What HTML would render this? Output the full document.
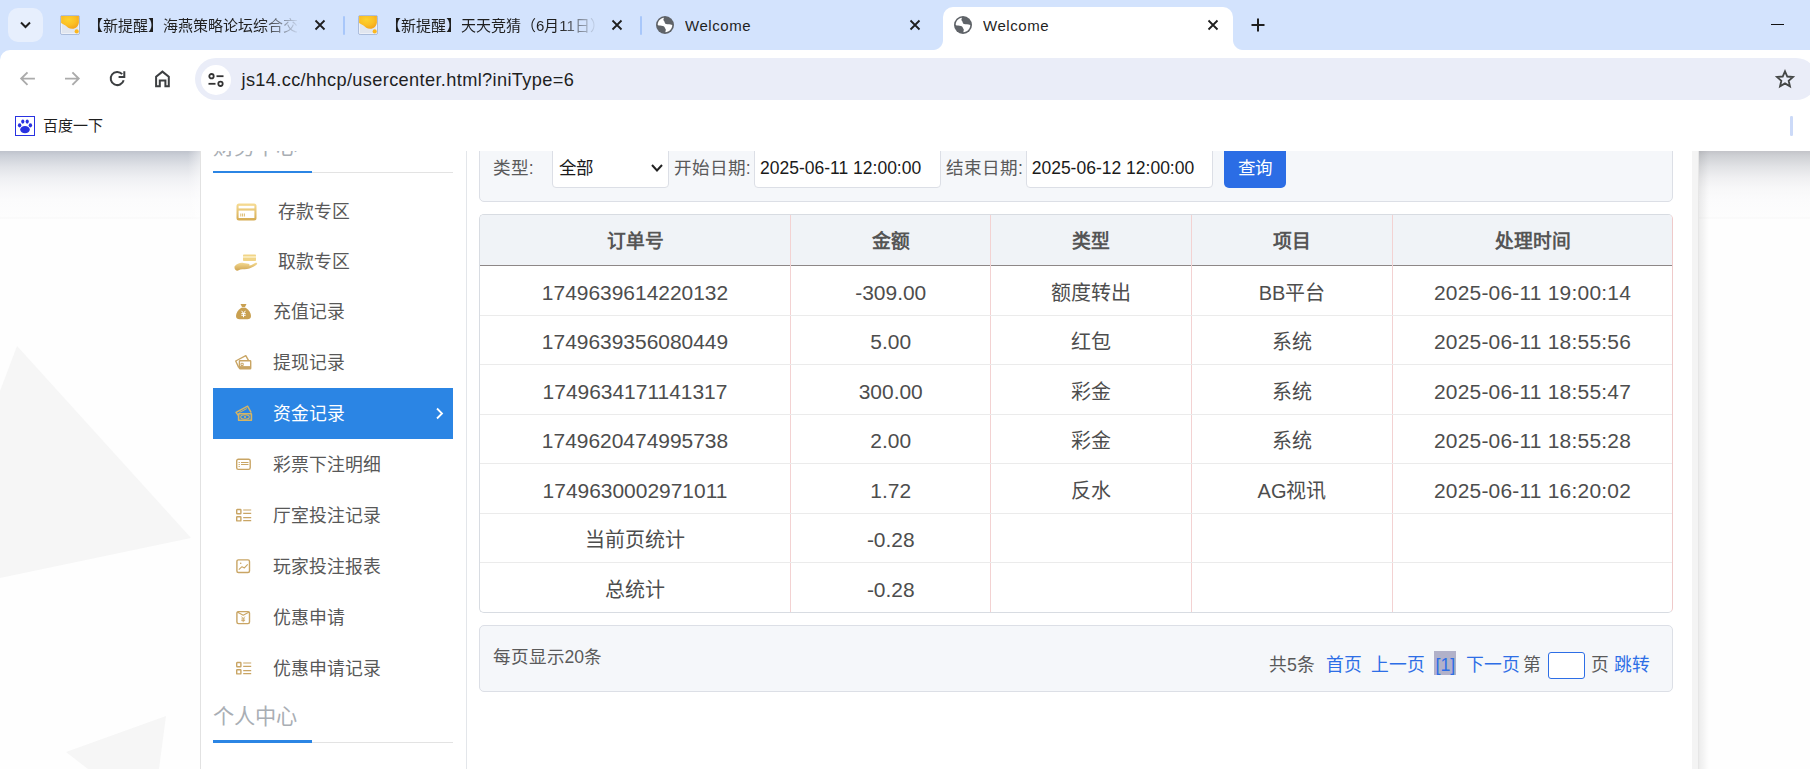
<!DOCTYPE html>
<html lang="zh-CN">
<head>
<meta charset="utf-8">
<title>Welcome</title>
<style>
*{box-sizing:border-box;margin:0;padding:0}
html,body{width:1810px;height:769px;overflow:hidden;background:#fff}
body{position:relative;font-family:"Liberation Sans",sans-serif;color:#4d4d4d}
.abs{position:absolute}
svg{display:block}

/* ---------- browser chrome ---------- */
#tabstrip{position:absolute;left:0;top:0;width:1810px;height:64px;background:#d3e3fd}
#tabsearch{position:absolute;left:8px;top:8px;width:35px;height:34px;border-radius:10px;background:#e7effd}
.ttitle.w{letter-spacing:.55px}
.ttitle{position:absolute;top:14.7px;height:22px;line-height:22px;font-size:15px;color:#1f1f1f;white-space:nowrap;overflow:hidden}
.fade{-webkit-mask-image:linear-gradient(to right,#000 82%,transparent 100%);mask-image:linear-gradient(to right,#000 82%,transparent 100%)}
.tsep{position:absolute;top:16px;width:2px;height:19px;background:#a8c7fa;border-radius:1px}
.fav{position:absolute;top:15px;width:20px;height:20px}
#activetab{position:absolute;left:943px;top:7px;width:290px;height:43px;background:#fff;border-radius:10px 10px 0 0}
#activetab:before,#activetab:after{content:"";position:absolute;bottom:0;width:10px;height:10px}
#activetab:before{left:-10px;background:radial-gradient(circle at 0 0,transparent 9.5px,#fff 10.5px)}
#activetab:after{right:-10px;background:radial-gradient(circle at 100% 0,transparent 9.5px,#fff 10.5px)}
#toolbar{position:absolute;left:0;top:50px;width:1810px;height:101px;background:#fff;border-top-left-radius:10px}
#omni{position:absolute;left:195px;top:8px;width:1622px;height:42px;border-radius:21px;background:#eaedf8}
#omni .chip{position:absolute;left:6px;top:6.5px;width:30px;height:30px;border-radius:15px;background:#fff}
#url{position:absolute;left:46.5px;top:1px;height:42px;line-height:42px;font-size:18.2px;letter-spacing:.36px;color:#1f1f1f;white-space:nowrap}
#bm{position:absolute;left:43px;top:66px;height:20px;line-height:20px;font-size:15px;color:#1f1f1f}

/* ---------- page ---------- */
#page{position:absolute;left:0;top:151px;width:1810px;height:618px;overflow:hidden;background:#fff}
.shade{position:absolute;top:0;height:68px;background:linear-gradient(to bottom,#bfc3cc 0,#ccd0d8 5px,#e1e3e8 16px,#eff0f3 27px,#f7f7f9 38px,#fbfbfc 49px,#fdfdfd 66px,#f7f7f7 67px,#fefefe 68px)}
.shade.r{background:linear-gradient(to bottom,#c3c4c9 0,#cfd1d5 5px,#e2e3e6 16px,#f0f0f2 27px,#f8f8f9 38px,#fbfbfc 49px,#fdfdfd 66px,#f7f7f7 67px,#fefefe 68px)}
.shade.l:after{content:"";position:absolute;right:0;top:0;width:12px;height:100%;background:linear-gradient(to right,rgba(255,255,255,0),rgba(255,255,255,.45))}
#rshadow{position:absolute;left:1699px;top:0;width:10px;height:618px;background:linear-gradient(to right,rgba(0,0,0,.07),rgba(0,0,0,0))}
#lbg{position:absolute;left:0;top:0;width:200px;height:618px;background:#fefefe}
#rbg{position:absolute;left:1699px;top:0;width:111px;height:618px;background:#fefefe}
#wrap{position:absolute;left:200px;top:0;width:1499px;height:618px;background:#fff;border-left:1px solid #e2e2e2}
#rstrip{position:absolute;left:1692px;top:0;width:7px;height:618px;background:#f4f4f4;border-right:1px solid #e6e6e6}
#side{position:absolute;left:201px;top:0;width:266px;height:618px;border-right:1px solid #e3e6ea}
.h{position:absolute;left:212.500px;font-size:21.2px;line-height:28px;color:#a9aeb4;white-space:nowrap}
.ul{position:absolute;left:213px;width:240px;height:1px;background:#e3e3e3}
.ul i{position:absolute;left:0;top:-1.5px;width:99px;height:2.5px;background:#2b85e4}
.mi{position:absolute;left:213px;width:240px;height:51px;font-size:17.85px;line-height:52.4px;color:#585858;white-space:nowrap}
.mi span{position:absolute;left:60px;top:0}
.mi.big span{left:65px}
.mi svg{position:absolute}
.mi.on{background:#2b85e4;color:#fff}

.panel{position:absolute;left:479px;width:1194px;background:#f5f7fa;border:1px solid #dcdfe6;border-radius:5px}
.lbl{position:absolute;font-size:17.6px;line-height:24px;color:#5a5a5a;white-space:nowrap}
.lbl.pg{font-size:17.8px}
.inp{position:absolute;top:-4px;height:41px;background:#fff;border:1px solid #dcdfe6;border-radius:4px;font-size:17.5px;line-height:41px;color:#1a1a1a;white-space:nowrap}
#btn{position:absolute;left:1224px;top:-4px;width:62px;height:41px;border-radius:5px;background:#2b6de5;color:#fff;font-size:17.5px;line-height:43px;text-align:center}

#tbl{position:absolute;left:479px;top:63px;width:1194px;height:399px;border:1px solid #d8dce2;border-right-color:#efcaca;border-radius:5px;overflow:hidden;background:#fff}
#tbl .hd{position:absolute;left:0;top:0;width:100%;height:50.7px;background:#f0f3f7;border-bottom:1.5px solid #8d8787}
.vl{position:absolute;top:0;width:1px;height:100%;background:#f3d2d2}
.hl{position:absolute;left:0;width:100%;height:1px;background:#ebebeb}
.c{position:absolute;text-align:center;white-space:nowrap;font-size:20px;line-height:30px;color:#4d4d4d}
.c.n{font-size:20.95px}
.c.d{letter-spacing:.22px}
.c.th{font-size:18.75px;font-weight:bold;color:#555}
a,a.lbl{color:#2d6ee6;text-decoration:none}
</style>
</head>
<body>

<!-- ================= TAB STRIP ================= -->
<div id="tabstrip">
  <div id="tabsearch">
    <svg class="abs" style="left:11px;top:12px" width="13" height="10" viewBox="0 0 13 10"><path d="M2 2.5 L6.5 7 L11 2.5" fill="none" stroke="#1f1f1f" stroke-width="2"/></svg>
  </div>

  <!-- tab 1 -->
  <svg class="fav" style="left:60px" viewBox="0 0 20 20"><defs><radialGradient id="fg" cx="0.420" cy="0.300" r="0.750"><stop offset="0" stop-color="#fdd22f"/><stop offset="0.550" stop-color="#fbbf24"/><stop offset="1" stop-color="#f3a31a"/></radialGradient></defs><rect x="0.500" y="0.500" width="19" height="19" rx="1.600" fill="#e1e6ef" stroke="#a6b8d9"/><rect x="1.400" y="1.400" width="17.200" height="17.200" rx="0.800" fill="none" stroke="#f3f5fa" stroke-width="0.800"/><path d="M1.100 1.100H18.900V7.500C18.500 11 16 13.800 12.200 13.800C9 13.800 7 12 5.500 10.600C4 9.500 2.500 9 1.100 8.100Z" fill="url(#fg)"/><circle cx="16.700" cy="16.400" r="2.100" fill="#fbb71f"/></svg>
  <div class="ttitle fade" style="left:88px;width:212px">【新提醒】海燕策略论坛综合交流</div>
  <svg class="abs" style="left:314px;top:19px" width="12" height="12" viewBox="0 0 12 12"><path d="M1.5 1.5 L10.5 10.5 M10.5 1.5 L1.5 10.5" stroke="#1f1f1f" stroke-width="1.8" fill="none"/></svg>
  <div class="tsep" style="left:343px"></div>

  <!-- tab 2 -->
  <svg class="fav" style="left:358px" viewBox="0 0 20 20"><rect x="0.500" y="0.500" width="19" height="19" rx="1.600" fill="#e1e6ef" stroke="#a6b8d9"/><rect x="1.400" y="1.400" width="17.200" height="17.200" rx="0.800" fill="none" stroke="#f3f5fa" stroke-width="0.800"/><path d="M1.100 1.100H18.900V7.500C18.500 11 16 13.800 12.200 13.800C9 13.800 7 12 5.500 10.600C4 9.500 2.500 9 1.100 8.100Z" fill="url(#fg)"/><circle cx="16.700" cy="16.400" r="2.100" fill="#fbb71f"/></svg>
  <div class="ttitle fade" style="left:386px;width:212px">【新提醒】天天竞猜（6月11日）</div>
  <svg class="abs" style="left:611px;top:19px" width="12" height="12" viewBox="0 0 12 12"><path d="M1.5 1.5 L10.5 10.5 M10.5 1.5 L1.5 10.5" stroke="#1f1f1f" stroke-width="1.8" fill="none"/></svg>
  <div class="tsep" style="left:640px"></div>

  <!-- tab 3 -->
  <svg class="abs" style="left:656px;top:16px" width="18" height="18" viewBox="0 0 24 24"><circle cx="12" cy="12" r="12" fill="#5f6368"/><path fill="#fff" d="M2.300 12C2.300 6.700 6 2.700 10.700 2.300C10 4 9.300 5.300 10.700 6.700C12 8 11.300 10 13.300 10.700C16 11.300 18.700 10.700 21.700 12C21.700 17.300 17.300 21.300 12.700 21.700C12 20 14 18.700 12.700 17.300C11.300 15.300 12 14 9.300 13.300C6.700 12.700 4 13.300 2.300 12Z"/></svg>
  <div class="ttitle w" style="left:685px;top:14.900px;width:200px">Welcome</div>
  <svg class="abs" style="left:909px;top:19px" width="12" height="12" viewBox="0 0 12 12"><path d="M1.500 1.500 L10.500 10.500 M10.500 1.500 L1.500 10.500" stroke="#1f1f1f" stroke-width="1.800" fill="none"/></svg>

  <!-- active tab -->
  <div id="activetab">
    <svg class="abs" style="left:11px;top:9px" width="18" height="18" viewBox="0 0 24 24"><circle cx="12" cy="12" r="12" fill="#5f6368"/><path fill="#fff" d="M2.300 12C2.300 6.700 6 2.700 10.700 2.300C10 4 9.300 5.300 10.700 6.700C12 8 11.300 10 13.300 10.700C16 11.300 18.700 10.700 21.700 12C21.700 17.300 17.300 21.300 12.700 21.700C12 20 14 18.700 12.700 17.300C11.300 15.300 12 14 9.300 13.300C6.700 12.700 4 13.300 2.300 12Z"/></svg>
    <div class="ttitle w" style="left:40px;top:7.700px;width:200px">Welcome</div>
    <svg class="abs" style="left:263.500px;top:12px" width="12" height="12" viewBox="0 0 12 12"><path d="M1.500 1.500 L10.500 10.500 M10.500 1.500 L1.500 10.500" stroke="#1f1f1f" stroke-width="1.800" fill="none"/></svg>
  </div>

  <!-- new tab + -->
  <svg class="abs" style="left:1251px;top:18px" width="14" height="14" viewBox="0 0 14 14"><path d="M7 0.500V13.500M0.500 7H13.500" stroke="#1f1f1f" stroke-width="2" fill="none"/></svg>
  <!-- minimize -->
  <div class="abs" style="left:1771px;top:24px;width:13px;height:1px;background:#111"></div>
</div>

<!-- ================= TOOLBAR ================= -->
<div id="toolbar">
  <!-- back -->
  <svg class="abs" style="left:18px;top:20px" width="19" height="19" viewBox="0 0 19 19"><path d="M16.900 8.600H3.300M9.500 2.300L3.200 8.600L9.500 14.900" fill="none" stroke="#ababab" stroke-width="1.900"/></svg>
  <!-- forward -->
  <svg class="abs" style="left:63px;top:20px" width="19" height="19" viewBox="0 0 19 19"><path d="M2 8.600H15.600M9.400 2.300L15.700 8.600L9.400 14.900" fill="none" stroke="#ababab" stroke-width="1.900"/></svg>
  <!-- reload -->
  <svg class="abs" style="left:107px;top:19px" width="20" height="20" viewBox="0 0 20 20"><path d="M16.670 11.200A6.600 6.600 0 1 1 15.200 5.080" fill="none" stroke="#3c3f41" stroke-width="2"/><path d="M17.300 2.200V7.900H11.600" fill="none" stroke="#3c3f41" stroke-width="2"/></svg>
  <!-- home -->
  <svg class="abs" style="left:153px;top:19px" width="20" height="20" viewBox="0 0 20 20"><path d="M3.100 17.300V7.700L9.450 2.600L15.800 7.700V17.300H12.400V11.600H6.800V17.300Z" fill="none" stroke="#3c3f41" stroke-width="2" stroke-linejoin="miter"/></svg>

  <div id="omni">
    <div class="chip">
      <svg class="abs" style="left:7px;top:8px" width="16" height="14" viewBox="0 0 16 14"><g fill="none" stroke="#333" stroke-width="1.800"><circle cx="3.500" cy="3.200" r="2.200"/><path d="M8.500 3.200H15.500"/><circle cx="12.500" cy="10.800" r="2.200"/><path d="M0.500 10.800H7.500"/></g></svg>
    </div>
    <div id="url">js14.cc/hhcp/usercenter.html?iniType=6</div>
    <!-- star -->
    <svg class="abs" style="left:1579px;top:10px" width="22" height="22" viewBox="0 0 24 24"><path d="M12 3.600l2.500 5.700 6.200.55-4.700 4.100 1.400 6.100L12 16.800 6.600 20.050l1.400-6.100-4.700-4.100 6.200-.55z" fill="none" stroke="#444746" stroke-width="2" stroke-linejoin="miter"/></svg>
  </div>

  <!-- bookmarks bar -->
  <svg class="abs" style="left:15px;top:66px" width="20" height="20" viewBox="0 0 20 20"><rect x="0.500" y="0.500" width="19" height="19" fill="#fff" stroke="#2932e1"/><g fill="#2932e1"><ellipse cx="10" cy="13.600" rx="4.800" ry="3.600"/><ellipse cx="4.600" cy="9.300" rx="1.700" ry="2.100"/><ellipse cx="15.400" cy="9.300" rx="1.700" ry="2.100"/><ellipse cx="7.800" cy="5.600" rx="1.600" ry="2.100"/><ellipse cx="12.200" cy="5.600" rx="1.600" ry="2.100"/></g></svg>
  <div id="bm">百度一下</div>
  <div class="abs" style="left:1790px;top:66px;width:2.500px;height:19.500px;background:#ccdaf8;border-radius:1.250px"></div>
</div>

<!-- ================= PAGE ================= -->
<div id="page">
  <!-- decorative background -->
  <div id="lbg"></div><div id="rbg"></div>
  <svg class="abs" style="left:0;top:0" width="200" height="618" viewBox="0 151 200 618"><polygon points="17,346 191,538 0,578 0,391" fill="#f6f6f6"/><polygon points="166,716 66,752 88,769 159,769" fill="#f6f6f6"/></svg>
  <div class="shade l" style="left:0;width:200px"></div>
  <div class="shade r" style="left:1699px;width:111px"></div>
  <div id="rshadow"></div>

  <div id="wrap"></div>
  <div id="rstrip"></div>
  <div id="side"></div>

  <!-- sidebar -->
  <div class="h" style="top:-18.200px">财务中心</div>
  <div class="ul" style="top:21px"><i></i></div>
  <div class="mi big" style="top:34.5px"><svg style="left:23px;top:17px" width="21" height="18" viewBox="0 0 21 18"><defs><linearGradient id="g1" x1="0" y1="0" x2="0" y2="1"><stop offset="0" stop-color="#f7dc93"/><stop offset="1" stop-color="#d5ab52"/></linearGradient></defs><rect x="0.5" y="0.5" width="20" height="17" rx="2.5" fill="url(#g1)"/><rect x="2.6" y="2.8" width="15.8" height="2.6" fill="#fff"/><rect x="2.6" y="7.6" width="15.8" height="7.4" fill="#fff"/><path d="M4.8 10.5v3M6.6 10.5v3M8.4 10.5v3" stroke="#d9b25c" stroke-width="0.9"/></svg><span>存款专区</span></div>
  <div class="mi big" style="top:84.7px"><svg style="left:21px;top:18px" width="24" height="17" viewBox="0 0 24 17"><defs><linearGradient id="g2" x1="0" y1="0" x2="0" y2="1"><stop offset="0" stop-color="#f4da92"/><stop offset="1" stop-color="#cfa450"/></linearGradient></defs><rect x="9" y="0.5" width="13" height="6.5" rx="0.8" fill="#f1d588"/><rect x="9" y="2.2" width="13" height="1.6" fill="#fbeec4"/><path d="M0.5 12.5c2.500-3.200 6-4.300 9-3.600l5 .8c1.300.2 1.300 1.800 0 1.900l-3.500.2 6-.6 4.500-2.400c1.400-.6 2.300.8 1.200 1.700-3 2.300-6.200 4.100-9.700 4.500-3.200.4-6.300-.2-8.300 1.200-1.800 1.300-4.700-.4-4.200-3.700z" fill="url(#g2)"/></svg><span>取款专区</span></div>
  <div class="mi " style="top:134.9px"><svg style="left:22px;top:17px" width="17" height="17" viewBox="0 0 17 17"><path d="M5.500 1h6l-1.600 3.200h-2.800z" fill="#c9a050"/><path d="M6.300 4.800h4.400c3.200 2 5.300 5.300 5.300 8.100 0 2.200-1.500 3.300-3.500 3.300h-8c-2 0-3.500-1.100-3.500-3.300 0-2.800 2.100-6.100 5.300-8.100z" fill="#c9a050"/><path d="M6.600 7.800l1.900 2.600 1.900-2.600M6.300 10.600h4.400M6.300 12.300h4.400M8.500 10.400v3.800" stroke="#fff" stroke-width="1" fill="none"/></svg><span>充值记录</span></div>
  <div class="mi " style="top:185.9px"><svg style="left:22px;top:17px" width="17" height="17" viewBox="0 0 17 17"><g fill="none" stroke="#c9a564" stroke-width="1.400" stroke-linejoin="round"><rect x="4.400" y="6.800" width="11.300" height="8" rx="0.600"/><path d="M4.400 13.300h11.300" stroke-width="2.400"/><rect x="6" y="9.300" width="2.200" height="2.200" stroke-width="1"/><path d="M3.800 13.600L0.700 7L10.800 1.700L13.600 6.600"/></g></svg><span>提现记录</span></div>
  <div class="mi on" style="top:236.8px"><svg style="left:22px;top:17px" width="18" height="17" viewBox="0 0 18 17"><g fill="none" stroke="#d6b563" stroke-width="1.400" stroke-linejoin="round"><rect x="3.600" y="8.700" width="12.800" height="6.600" rx="0.400" stroke-width="1.600"/><ellipse cx="10" cy="12" rx="4.300" ry="2.200" stroke-width="1.100"/><circle cx="10" cy="12" r="1.100" fill="#d6b563" stroke="none"/><path d="M3.200 10.300L1 7.300L12.600 1.200L16.200 7.600"/><path d="M4.500 7.400L11.800 3.600" stroke-width="1"/></g></svg><span>资金记录</span><svg style="left:222px;top:19px" width="9" height="13" viewBox="0 0 9 13"><path d="M2 1.500L7 6.500L2 11.500" fill="none" stroke="#fff" stroke-width="1.800"/></svg></div>
  <div class="mi " style="top:287.9px"><svg style="left:22px;top:19px" width="16" height="13" viewBox="0 0 16 13"><g fill="none" stroke="#c9a564" stroke-width="1.400"><rect x="1.700" y="1.200" width="13.500" height="10.200" rx="1.600"/><path d="M3.600 4.500h1.200M6 4.500h7.500M3.600 6.500h1.200M6 6.500h7.500M3.600 8.500h1.200" stroke-width="1.100"/></g></svg><span>彩票下注明细</span></div>
  <div class="mi " style="top:338.9px"><svg style="left:22px;top:18px" width="17" height="15" viewBox="0 0 17 15"><g fill="none" stroke="#c9a564" stroke-width="1.400"><rect x="1.700" y="1.500" width="4.200" height="4.200" rx="0.500"/><rect x="1.700" y="8.700" width="4.200" height="4.200" rx="0.500"/><path d="M8.200 2h8M8.200 5.300h8M8.200 9.600h8M8.200 12.700h8" stroke-width="1.200"/></g></svg><span>厅室投注记录</span></div>
  <div class="mi " style="top:389.9px"><svg style="left:22px;top:18px" width="16" height="15" viewBox="0 0 16 15"><g fill="none" stroke="#c9a564" stroke-width="1.400" stroke-linejoin="round"><rect x="1.900" y="0.900" width="12.600" height="12.600" rx="1.500"/><path d="M3.800 10.600l3.200-2.900 2.400 1.200 3.300-3.600" stroke-width="1.100"/><circle cx="5.700" cy="4.300" r="0.800" fill="#c9a564" stroke="none"/></g></svg><span>玩家投注报表</span></div>
  <div class="mi " style="top:440.9px"><svg style="left:22px;top:18px" width="16" height="15" viewBox="0 0 16 15"><g fill="none" stroke="#c9a564" stroke-width="1.400" stroke-linejoin="round"><rect x="1.900" y="1.600" width="12.600" height="12" rx="1.500"/><path d="M2.200 1.900L8.200 5.300L14.200 1.900" stroke-width="1.100"/><path d="M6.500 6.600L8.200 8.600L9.900 6.600M6.300 9h3.800M6.300 10.600h3.800M8.200 8.600v3.600" stroke-width="0.900"/></g></svg><span>优惠申请</span></div>
  <div class="mi " style="top:491.9px"><svg style="left:22px;top:18px" width="17" height="15" viewBox="0 0 17 15"><g fill="none" stroke="#c9a564" stroke-width="1.400"><rect x="1.700" y="1.500" width="4.200" height="4.200" rx="0.500"/><rect x="1.700" y="8.700" width="4.200" height="4.200" rx="0.500"/><path d="M8.200 2h8M8.200 5.300h8M8.200 9.600h8M8.200 12.700h8" stroke-width="1.200"/></g></svg><span>优惠申请记录</span></div>
  <div class="h" style="top:551.600px">个人中心</div>
  <div class="ul" style="top:590.5px"><i></i></div>

  <!-- main -->
  <div class="panel" style="top:-17px;height:68px"></div>
  <div class="lbl" style="left:492.7px;top:4.5px">类型:</div>
  <div class="inp" style="left:552px;width:117px;padding-left:6px">全部<svg class="abs" style="left:97px;top:15px" width="14" height="10" viewBox="0 0 14 10"><path d="M2 2L7 7.500L12 2" fill="none" stroke="#222" stroke-width="2"/></svg></div>
  <div class="lbl" style="left:673.7px;top:4.5px">开始日期:</div>
  <div class="inp" style="left:753.5px;width:187px;padding-left:5.500px">2025-06-11 12:00:00</div>
  <div class="lbl" style="left:946px;top:4.5px">结束日期:</div>
  <div class="inp" style="left:1025.7px;width:187px;padding-left:5px">2025-06-12 12:00:00</div>
  <div id="btn">查询</div>
  <div id="tbl">
    <div class="hd"></div>
    <div class="vl" style="left:310px"></div>
    <div class="vl" style="left:510px"></div>
    <div class="vl" style="left:711px"></div>
    <div class="vl" style="left:912px"></div>
    <div class="hl" style="top:100px"></div>
    <div class="hl" style="top:149px"></div>
    <div class="hl" style="top:199px"></div>
    <div class="hl" style="top:248px"></div>
    <div class="hl" style="top:298px"></div>
    <div class="hl" style="top:347px"></div>
    <div class="c th" style="left:0px;width:310px;top:11.600px">订单号</div>
    <div class="c th" style="left:311px;width:199.5px;top:11.600px">金额</div>
    <div class="c th" style="left:511.5px;width:199.5px;top:11.600px">类型</div>
    <div class="c th" style="left:712px;width:200px;top:11.600px">项目</div>
    <div class="c th" style="left:913px;width:279px;top:11.600px">处理时间</div>
    <div class="c n" style="left:0px;width:310px;top:62.5px">1749639614220132</div>
    <div class="c n" style="left:311px;width:199.5px;top:62.5px">-309.00</div>
    <div class="c" style="left:511.5px;width:199.5px;top:62.5px">额度转出</div>
    <div class="c" style="left:712px;width:200px;top:62.5px">BB平台</div>
    <div class="c n d" style="left:913px;width:279px;top:62.5px">2025-06-11 19:00:14</div>
    <div class="c n" style="left:0px;width:310px;top:112.0px">1749639356080449</div>
    <div class="c n" style="left:311px;width:199.5px;top:112.0px">5.00</div>
    <div class="c" style="left:511.5px;width:199.5px;top:112.0px">红包</div>
    <div class="c" style="left:712px;width:200px;top:112.0px">系统</div>
    <div class="c n d" style="left:913px;width:279px;top:112.0px">2025-06-11 18:55:56</div>
    <div class="c n" style="left:0px;width:310px;top:161.5px">1749634171141317</div>
    <div class="c n" style="left:311px;width:199.5px;top:161.5px">300.00</div>
    <div class="c" style="left:511.5px;width:199.5px;top:161.5px">彩金</div>
    <div class="c" style="left:712px;width:200px;top:161.5px">系统</div>
    <div class="c n d" style="left:913px;width:279px;top:161.5px">2025-06-11 18:55:47</div>
    <div class="c n" style="left:0px;width:310px;top:211.0px">1749620474995738</div>
    <div class="c n" style="left:311px;width:199.5px;top:211.0px">2.00</div>
    <div class="c" style="left:511.5px;width:199.5px;top:211.0px">彩金</div>
    <div class="c" style="left:712px;width:200px;top:211.0px">系统</div>
    <div class="c n d" style="left:913px;width:279px;top:211.0px">2025-06-11 18:55:28</div>
    <div class="c n" style="left:0px;width:310px;top:260.5px">1749630002971011</div>
    <div class="c n" style="left:311px;width:199.5px;top:260.5px">1.72</div>
    <div class="c" style="left:511.5px;width:199.5px;top:260.5px">反水</div>
    <div class="c" style="left:712px;width:200px;top:260.5px">AG视讯</div>
    <div class="c n d" style="left:913px;width:279px;top:260.5px">2025-06-11 16:20:02</div>
    <div class="c" style="left:0px;width:310px;top:310.0px">当前页统计</div>
    <div class="c n" style="left:311px;width:199.5px;top:310.0px">-0.28</div>
    <div class="c" style="left:0px;width:310px;top:359.5px">总统计</div>
    <div class="c n" style="left:311px;width:199.5px;top:359.5px">-0.28</div>
  </div>
  <div class="panel" style="top:474px;height:67px"></div>
  <div class="lbl" style="left:492.5px;top:494px">每页显示20条</div>
  <div class="lbl pg" style="left:1269.0px;top:501.6px;">共5条</div>
  <a class="lbl pg" style="left:1325.6px;top:501.6px;">首页</a>
  <a class="lbl pg" style="left:1370.8px;top:501.6px;">上一页</a>
  <div class="abs" style="left:1434px;top:500.20000000000005px;width:22px;height:23.500px;background:#b1b1c9"></div>
  <a class="lbl pg" style="left:1435.5px;top:501.6px;">[1]</a>
  <a class="lbl pg" style="left:1466.0px;top:501.6px;">下一页</a>
  <div class="lbl pg" style="left:1523.0px;top:501.6px;">第</div>
  <div class="abs" style="left:1548px;top:500.70000000000005px;width:37px;height:27px;background:#fff;border:1px solid #2d6ee6;border-radius:3px"></div>
  <div class="lbl pg" style="left:1591.0px;top:501.6px;">页</div>
  <a class="lbl pg" style="left:1613.7px;top:501.6px;">跳转</a>
</div>

</body>
</html>
